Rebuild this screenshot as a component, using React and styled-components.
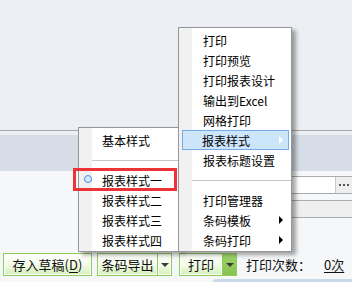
import React from 'react';
import styled, { createGlobalStyle } from 'styled-components';

const GlobalStyle = createGlobalStyle`
  html, body {
    margin: 0;
    padding: 0;
    width: 352px;
    height: 282px;
    overflow: hidden;
    background: #ecf0f4;
    font-family: "Noto Sans CJK SC", "Noto Sans", sans-serif;
  }
`;

const Page = styled.div`
  position: relative;
  width: 352px;
  height: 282px;
  display: flex;
  flex-direction: column;
  background: #ecf0f4;
`;

const TopArea = styled.div`
  height: 130px;
  border-bottom: 1px solid #a3a6aa;
  flex: none;
`;

const Band = styled.div`
  flex: none;
  margin-top: 4px;
  height: 36px;
  background: #d6dde6;
`;

const FormArea = styled.div`
  flex: 1;
  display: flex;
  flex-direction: column;
  background: #f5f7f9;
  padding-top: 5px;
`;

const InputRow = styled.div`
  margin-left: 180px;
  height: 16px;
  display: flex;
  border-top: 1px solid #a8abaf;
  border-bottom: 1px solid #a8abaf;
  background: #fff;
`;

const InputBox = styled.div`
  flex: 1;
`;

const DotsButton = styled.div`
  width: 16px;
  background: #eeeeee;
  border-left: 1px solid #c8c8c8;
  display: flex;
  align-items: center;
  justify-content: center;
  gap: 2px;
  span {
    width: 2px;
    height: 2px;
    background: #555;
  }
`;

const GreyRow = styled.div`
  margin-left: 180px;
  margin-top: 6px;
  height: 16px;
  border-top: 1px solid #a8abaf;
  border-bottom: 1px solid #a8abaf;
  background: #efefef;
`;

const Toolbar = styled.div`
  margin-top: auto;
  height: 23px;
  display: flex;
  align-items: center;
  padding-left: 3px;
  margin-bottom: 6px;
  font-size: 13px;
  color: #111;
`;

const Btn = styled.div`
  box-sizing: border-box;
  height: 23px;
  width: ${p => p.w}px;
  margin-right: ${p => p.gap || 0}px;
  border: 1px solid #8fcb5e;
  box-shadow: inset 0 0 0 1px #fbfff6;
  background: linear-gradient(#ffffff, #f3fbe9 50%, #d3efb9);
  display: flex;
  align-items: center;
  justify-content: center;
  letter-spacing: 0;
  u {
    text-underline-offset: 2px;
  }
`;

const ArrowBtn = styled(Btn)`
  border-left: none;
  background: ${p => (p.pressed ? 'linear-gradient(#9fd46b, #86c34e)' : 'linear-gradient(#ffffff, #f3fbe9 50%, #d3efb9)')};
  box-shadow: ${p => (p.pressed ? 'none' : 'inset 0 0 0 1px #fbfff6')};
  &::after {
    content: '';
    border-left: 4px solid transparent;
    border-right: 4px solid transparent;
    border-top: 4px solid #3a3a3a;
  }
`;

const Label = styled.span`
  margin-left: 9px;
  font-size: 13px;
`;

const Count = styled.span`
  margin-left: 13px;
  text-decoration: underline;
  text-underline-offset: 2px;
`;

const BottomStrip = styled.div`
  position: absolute;
  left: 213px;
  right: 0;
  bottom: 0;
  height: 3px;
  border-radius: 3px 0 0 0;
  background: #c9d9ea;
`;

const Menu = styled.div`
  position: absolute;
  left: ${p => p.x}px;
  top: ${p => p.y}px;
  width: ${p => p.w}px;
  box-sizing: border-box;
  border: 1px solid #979797;
  background: linear-gradient(to right, #f1f1f1 13px, #ffffff 13px);
  padding: 2px 0 1px;
  box-shadow: 4px 3px 4px rgba(0, 0, 0, 0.35);
  font-size: 12px;
  color: #000;
`;

const Item = styled.div`
  position: relative;
  box-sizing: border-box;
  height: 20px;
  margin: 0 2px 0 3px;
  padding-left: ${p => p.indent}px;
  display: flex;
  align-items: center;
  border: 1px solid ${p => (p.active ? '#73abe6' : 'transparent')};
  background: ${p => (p.active ? '#cce5fa' : 'transparent')};
  white-space: nowrap;
`;

const Arrow = styled.span`
  position: absolute;
  right: 5px;
  top: 5px;
  border-top: 4px solid transparent;
  border-bottom: 4px solid transparent;
  border-left: 4px solid ${p => (p.light ? '#ffffff' : '#000000')};
`;

const Separator = styled.div`
  height: 20px;
  display: flex;
  align-items: center;
  margin-left: 13px;
  &::after {
    content: '';
    flex: 1;
    height: 1px;
    background: #c6c6c6;
  }
`;

const Radio = styled.span`
  position: absolute;
  left: 1px;
  top: 4px;
  width: 8px;
  height: 8px;
  box-sizing: border-box;
  border-radius: 50%;
  border: 1px solid #3d8fe8;
  background: #d8ebfc;
`;

const Highlight = styled.div`
  position: absolute;
  left: 73px;
  top: 168px;
  width: 104px;
  height: 23px;
  box-sizing: border-box;
  border: 3px solid #ee3338;
`;

export default function App() {
  return (
    <>
      <GlobalStyle />
      <Page>
        <TopArea />
        <Band />
        <FormArea>
          <InputRow>
            <InputBox />
            <DotsButton>
              <span />
              <span />
              <span />
            </DotsButton>
          </InputRow>
          <GreyRow />
          <Toolbar>
            <Btn w={89} gap={5}>
              存入草稿(<u>D</u>)
            </Btn>
            <Btn w={61}>条码导出</Btn>
            <ArrowBtn w={14} gap={7} />
            <Btn w={44}>打印</Btn>
            <ArrowBtn w={14} pressed />
            <Label>打印次数：</Label>
            <Count>0次</Count>
          </Toolbar>
        </FormArea>
        <BottomStrip />

        <Menu x={78} y={127} w={102}>
          <Item indent={19}>基本样式</Item>
          <Separator />
          <Item indent={19}>
            <Radio />
            报表样式一
          </Item>
          <Item indent={19}>报表样式二</Item>
          <Item indent={19}>报表样式三</Item>
          <Item indent={19}>报表样式四</Item>
        </Menu>

        <Menu x={178} y={27} w={114}>
          <Item indent={20}>打印</Item>
          <Item indent={20}>打印预览</Item>
          <Item indent={20}>打印报表设计</Item>
          <Item indent={20}>输出到Excel</Item>
          <Item indent={20}>网格打印</Item>
          <Item indent={19} active>
            报表样式
            <Arrow light />
          </Item>
          <Item indent={20}>报表标题设置</Item>
          <Separator />
          <Item indent={20}>打印管理器</Item>
          <Item indent={20}>
            条码模板
            <Arrow />
          </Item>
          <Item indent={20}>
            条码打印
            <Arrow />
          </Item>
        </Menu>

        <Highlight />
      </Page>
    </>
  );
}
